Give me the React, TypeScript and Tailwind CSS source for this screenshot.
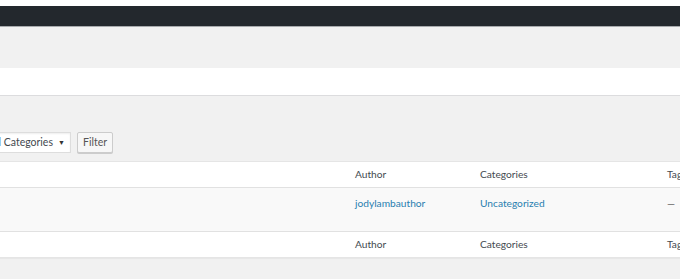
import React from "react";

const font = { fontFamily: 'Lato, "Open Sans", sans-serif' };

function Row({ author, categories, tags, alt, className = "" }: { author: React.ReactNode; categories: React.ReactNode; tags: React.ReactNode; alt?: boolean; className?: string }) {
  return (
    <div className={`flex ${alt ? "bg-[#f9f9f9]" : "bg-white"} ${className}`}>
      <div className="w-[349px] shrink-0" />
      <div className="w-[125px] shrink-0 pl-[6px]">{author}</div>
      <div className="w-[187px] shrink-0 pl-[6px]">{categories}</div>
      <div className="flex-1 pl-[6px] whitespace-nowrap">{tags}</div>
    </div>
  );
}

export default function App() {
  return (
    <div className="w-[680px] h-[279px] overflow-hidden bg-[#f1f1f1] text-[10.2px] text-[#444a50]" style={font}>
      <div className="h-[6px] bg-white" />
      <div className="h-[20px] bg-[#23282d]" />
      <div className="h-[1px] bg-[#a7aaad]" />
      <div className="h-[41px] bg-[#f1f1f1]" />
      <div className="h-[28px] bg-white border-b border-[#dcdcde]" />

      <div className="flex items-center gap-[6px] pt-[36px] pb-[8px]">
        <div className="-ml-[18px] flex h-[21px] w-[89px] items-center justify-between border border-[#dddddd] bg-white pl-[6px] pr-[5px] shadow-[inset_0_1px_2px_rgba(0,0,0,0.07)]">
          <span className="text-[10.5px]">All Categories</span>
          <span className="text-[7px] text-[#333]">▼</span>
        </div>
        <div className="flex h-[21px] w-[36px] items-center justify-center rounded-[2px] border border-[#cccccc] bg-[#f7f7f7] text-[10.5px] text-[#555] shadow-[0_1px_0_#cccccc]">
          Filter
        </div>
      </div>

      <div className="border-y border-[#e5e5e5] shadow-[0_1px_1px_rgba(0,0,0,0.04)]">
        <Row
          className="h-[26px] items-center border-b border-[#e1e1e1]"
          author="Author"
          categories="Categories"
          tags="Tags"
        />
        <Row
          alt
          className="h-[43px] pt-[8px]"
          author={<span className="text-[#2a7fb0]">jodylambauthor</span>}
          categories={<span className="text-[#2a7fb0]">Uncategorized</span>}
          tags={<span className="text-[#555]">—</span>}
        />
        <Row
          className="h-[26px] items-center border-t border-[#e1e1e1]"
          author="Author"
          categories="Categories"
          tags="Tags"
        />
      </div>
    </div>
  );
}
